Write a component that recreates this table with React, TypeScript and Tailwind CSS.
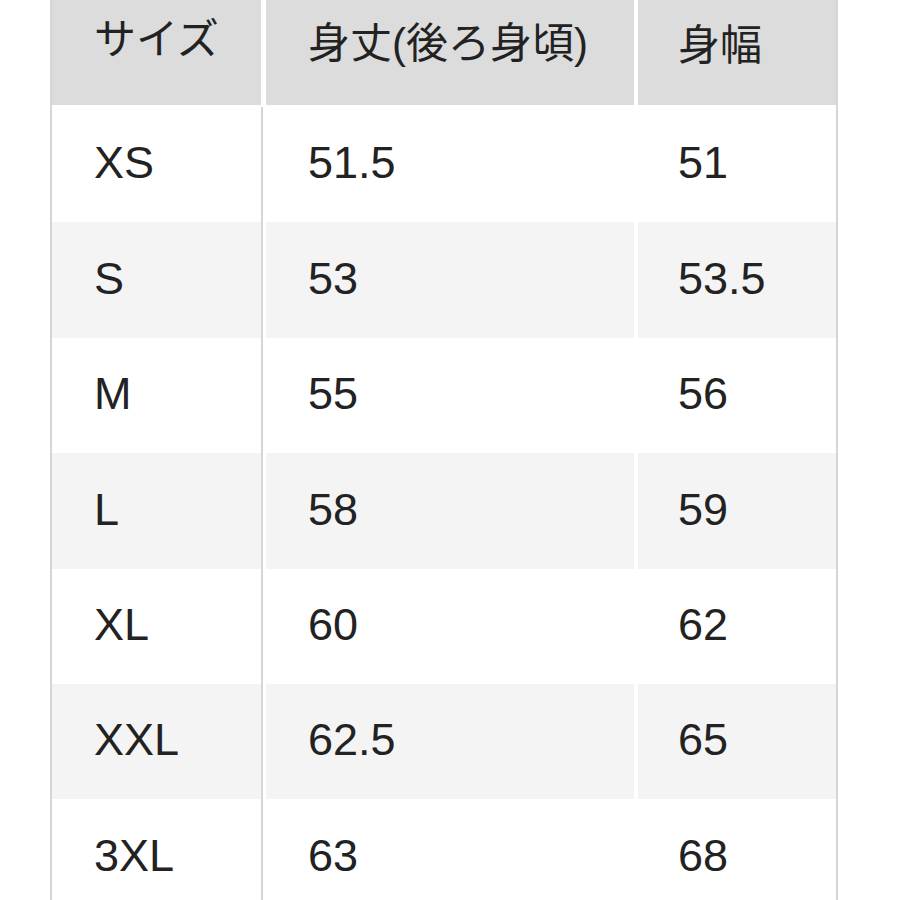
const rows: [string, string, string][] = [
  ["XS", "51.5", "51"],
  ["S", "53", "53.5"],
  ["M", "55", "56"],
  ["L", "58", "59"],
  ["XL", "60", "62"],
  ["XXL", "62.5", "65"],
  ["3XL", "63", "68"],
]

const font = { fontFamily: '"Liberation Sans", "Noto Sans CJK JP", sans-serif' }

function App() {
  return (
    <div className="w-[900px] h-[900px] overflow-hidden bg-white text-[#222222]" style={font}>
      <div className="ml-[50px] w-[788px] border-x-2 border-[#d6d6d6] flex flex-col">
        <div className="flex h-[105px] text-[42px]">
          <div className="w-[209px] bg-[#dcdcdc] flex items-center pl-[42px] pb-[26px]">サイズ</div>
          <div className="w-[5px]" />
          <div className="w-[368px] bg-[#dcdcdc] flex items-center pl-[42px] pb-[18px]">身丈(後ろ身頃)</div>
          <div className="w-[4px]" />
          <div className="flex-1 bg-[#dcdcdc] flex items-center pl-[40px] pb-[14px]">身幅</div>
        </div>
        <div className="h-[2px]" />
        {rows.map((r, i) => {
          const bg = i % 2 === 1 ? "bg-[#f4f4f4]" : "bg-white"
          return (
            <div key={r[0]} className="flex h-[115.4px] text-[45px]">
              <div className={`w-[209px] ${bg} flex items-center pl-[42px] pb-[3px]`}>{r[0]}</div>
              <div className="w-[5px] flex">
                <div className="w-[2px] bg-[#d6d6d6]" />
              </div>
              <div className={`w-[368px] ${bg} flex items-center pl-[42px] pb-[3px]`}>{r[1]}</div>
              <div className="w-[4px]" />
              <div className={`flex-1 ${bg} flex items-center pl-[40px] pb-[3px]`}>{r[2]}</div>
            </div>
          )
        })}
      </div>
    </div>
  )
}

export default App
